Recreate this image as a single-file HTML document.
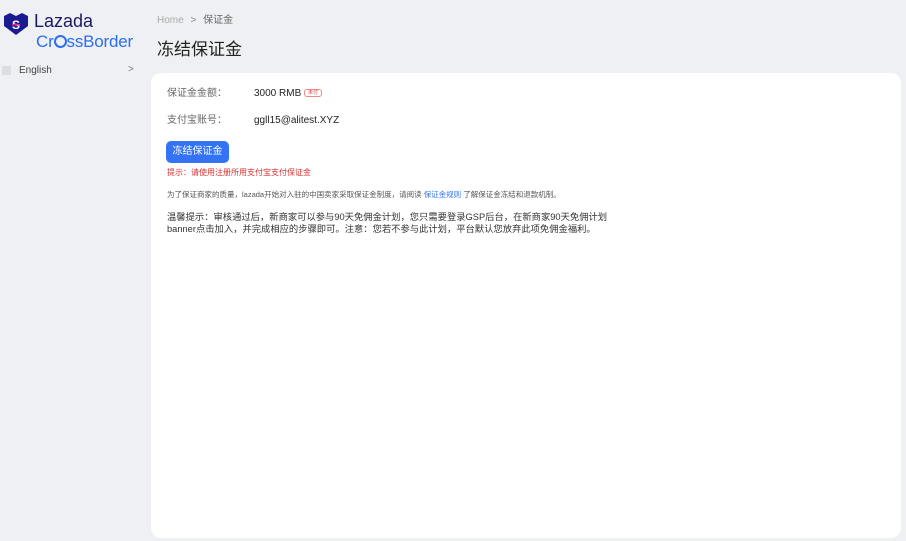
<!DOCTYPE html>
<html><head><meta charset="utf-8"><style>
body{margin:0;width:906px;height:541px;background:#eff0f4;font-family:"Liberation Sans","Noto Sans CJK SC",sans-serif;position:relative;overflow:hidden;color:#222}
.a{position:absolute;white-space:nowrap;line-height:1.2}
.card{position:absolute;left:151px;top:73px;width:750px;height:465px;background:#fff;border-radius:10px}
</style></head><body>
<svg class="a" style="left:2px;top:12px" width="28" height="24" viewBox="0 0 28 24"><path d="M2 4 L8 1 L14 4 L20 1 L26 4 L26 14 L14 23 L2 14Z" fill="#1b1b8f"/><text x="14" y="17" font-size="12" font-weight="bold" fill="#fff" text-anchor="middle" font-family="Liberation Sans">S</text><path d="M10 13 q4 -1 8 0" stroke="#e0269a" stroke-width="1.5" fill="none"/></svg>
<div class="a" style="left:34px;top:11px;font-size:18px;color:#1b1b5f">Lazada</div>
<div class="a" style="left:36px;top:32px;font-size:17px;color:#2b6ef0;letter-spacing:-0.2px">Cr<span style="display:inline-block;width:13px;height:13px;border:2px solid #2b6ef0;border-radius:50%;box-sizing:border-box;vertical-align:-1px"></span>ssBorder</div>
<div class="a" style="left:2px;top:66px;width:9px;height:9px;background:#dcdde2"></div>
<div class="a" style="left:19px;top:65px;font-size:10px;color:#444">English</div>
<div class="a" style="left:128px;top:64px;font-size:10px;color:#777">&gt;</div>
<div class="a" style="left:157px;top:15px;font-size:10px;color:#aaa">Home <span style="color:#888;margin:0 4px">&gt;</span> <span style="color:#666">保证金</span></div>
<div class="a" style="left:157px;top:40px;font-size:17px;color:#222">冻结保证金</div>
<div class="card"></div>
<div class="a" style="left:167px;top:88px;font-size:10px;color:#666">保证金金额：</div>
<div class="a" style="left:254px;top:88px;font-size:10px;color:#222">3000 RMB <span style="display:inline-block;font-size:5px;color:#e04040;border:1px solid #e88;border-radius:3px;padding:0 3px;vertical-align:2px">未付</span></div>
<div class="a" style="left:167px;top:115px;font-size:10px;color:#666">支付宝账号：</div>
<div class="a" style="left:254px;top:115px;font-size:10px;color:#222">ggll15@alitest.XYZ</div>
<div class="a" style="left:166px;top:141px;width:63px;height:22px;background:#3473f5;border-radius:5px;color:#fff;font-size:10px;line-height:22px;text-align:center">冻结保证金</div>
<div class="a" style="left:167px;top:168px;font-size:8px;color:#d93030">提示：请使用注册所用支付宝支付保证金</div>
<div class="a" style="left:167px;top:190px;font-size:7.5px;color:#555">为了保证商家的质量，lazada开始对入驻的中国卖家采取保证金制度，请阅读 <span style="color:#3473f5">保证金规则</span> 了解保证金冻结和退款机制。</div>
<div class="a" style="left:167px;top:212px;font-size:9.3px;color:#333;line-height:11.5px">温馨提示：审核通过后，新商家可以参与90天免佣金计划，您只需要登录GSP后台，在新商家90天免佣计划<br>banner点击加入，并完成相应的步骤即可。注意：您若不参与此计划，平台默认您放弃此项免佣金福利。</div>
</body></html>
